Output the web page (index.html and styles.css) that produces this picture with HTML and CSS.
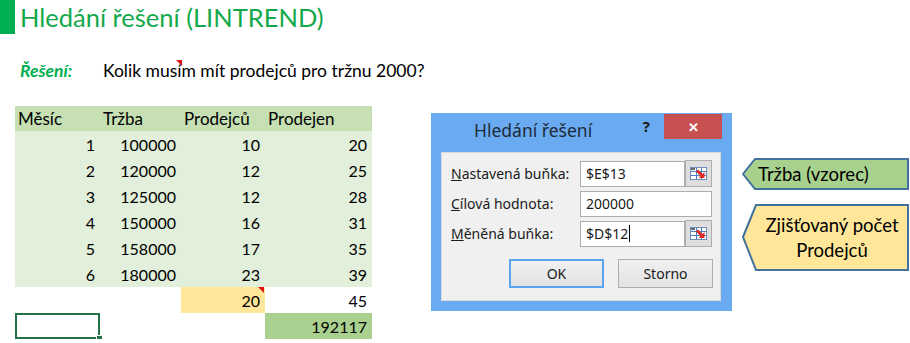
FILE: index.html
```html
<!DOCTYPE html>
<html lang="cs">
<head>
    <meta charset="UTF-8">
    <title>Hledání řešení (LINTREND)</title>
    <link rel="stylesheet" href="styles.css">
</head>
<body>
    <div class="title-row">
        <span class="title-mark"></span>
        <h1>Hledání řešení (LINTREND)</h1>
    </div>

    <div class="question-row">
        <span class="q-label">Řešení:</span>
        <span class="q-text">Kolik musím mít prodejců pro tržnu 2000?</span>
        <span class="comment-mark q-mark"></span>
    </div>

    <div class="workspace">
        <table class="data">
            <colgroup>
                <col class="col-a"><col class="col-b"><col class="col-c"><col class="col-d">
            </colgroup>
            <tr class="head">
                <th>Měsíc</th><th>Tržba</th><th>Prodejců</th><th>Prodejen</th>
            </tr>
            <tr class="body"><td>1</td><td>100000</td><td>10</td><td>20</td></tr>
            <tr class="body"><td>2</td><td>120000</td><td>12</td><td>25</td></tr>
            <tr class="body"><td>3</td><td>125000</td><td>12</td><td>28</td></tr>
            <tr class="body"><td>4</td><td>150000</td><td>16</td><td>31</td></tr>
            <tr class="body"><td>5</td><td>158000</td><td>17</td><td>35</td></tr>
            <tr class="body"><td>6</td><td>180000</td><td>23</td><td>39</td></tr>
            <tr>
                <td></td><td></td>
                <td class="changing">20<span class="comment-mark cell-mark"></span></td>
                <td>45</td>
            </tr>
            <tr>
                <td class="selected"><span class="fill-handle"></span></td><td></td><td></td>
                <td class="target">192117</td>
            </tr>
        </table>

        <div class="dialog">
            <div class="dlg-titlebar">
                <span class="dlg-title">Hledání řešení</span>
                <span class="dlg-help">?</span>
                <span class="dlg-close">✕</span>
            </div>
            <div class="dlg-panel">
                <div class="field">
                    <label><u>N</u>astavená buňka:</label>
                    <span class="input">$E$13</span>
                    <span class="ref-btn">
                        <svg width="19" height="15" viewBox="0 0 19 15">
                            <rect x="1.5" y="1.5" width="16" height="12" fill="#fff" stroke="#6f8fb8"/>
                            <path d="M2 5.5H17M2 9.5H17M7.5 2V13M12.5 2V13" stroke="#4d7dc4" stroke-width="1"/>
                            <path d="M2 3H6" stroke="#333" stroke-width="1.5"/>
                            <path d="M8 4.5L13 9.5" stroke="#e02a1e" stroke-width="3"/>
                            <polygon points="15.5,12 9.5,12 15.5,6" fill="#e02a1e"/>
                        </svg>
                    </span>
                </div>
                <div class="field">
                    <label><u>C</u>ílová hodnota:</label>
                    <span class="input wide">200000</span>
                </div>
                <div class="field">
                    <label><u>M</u>ěněná buňka:</label>
                    <span class="input">$D$12<span class="caret"></span></span>
                    <span class="ref-btn">
                        <svg width="19" height="15" viewBox="0 0 19 15">
                            <rect x="1.5" y="1.5" width="16" height="12" fill="#fff" stroke="#6f8fb8"/>
                            <path d="M2 5.5H17M2 9.5H17M7.5 2V13M12.5 2V13" stroke="#4d7dc4" stroke-width="1"/>
                            <path d="M2 3H6" stroke="#333" stroke-width="1.5"/>
                            <path d="M8 4.5L13 9.5" stroke="#e02a1e" stroke-width="3"/>
                            <polygon points="15.5,12 9.5,12 15.5,6" fill="#e02a1e"/>
                        </svg>
                    </span>
                </div>
                <div class="dlg-buttons">
                    <button class="default">OK</button>
                    <button>Storno</button>
                </div>
            </div>
        </div>

        <div class="notes">
            <div class="note note-green">
                <svg class="note-shape" width="168" height="32" viewBox="0 0 168 32">
                    <polygon points="1,16 13,1 166,1 166,31 13,31" fill="#a9d18e" stroke="#41719c" stroke-width="2"/>
                </svg>
                <span class="note-text">Tržba (vzorec)</span>
            </div>
            <div class="note note-yellow">
                <svg class="note-shape" width="168" height="67" viewBox="0 0 168 67">
                    <polygon points="1,33 14,1 166,1 166,66 14,66" fill="#ffe699" stroke="#41719c" stroke-width="2"/>
                </svg>
                <span class="note-text">Zjišťovaný počet<br>Prodejců</span>
            </div>
        </div>
    </div>
</body>
</html>
```

FILE: styles.css
```css
body {
    margin: 0;
    background-color: #ffffff;
    font-family: Lato, "Liberation Sans", sans-serif;
    font-size: 16px;
    color: #000000;
}

/* title */
.title-row {
    display: flex;
    align-items: center;
    height: 34px;
}

.title-mark {
    width: 15px;
    height: 34px;
    background-color: #00b050;
}

h1 {
    margin: 0 0 0 5px;
    font-size: 25.5px;
    font-weight: 400;
    color: #13a94b;
}

/* question */
.question-row {
    position: relative;
    display: flex;
    align-items: center;
    height: 72px;
    padding-left: 20px;
    font-size: 17.5px;
}

.q-label {
    width: 83px;
    font-weight: bold;
    font-style: italic;
    color: #00b050;
}

.comment-mark {
    position: absolute;
    width: 0;
    height: 0;
    border-top: 6px solid #e0120f;
    border-left: 6px solid transparent;
}

.q-mark {
    top: 26px;
    left: 176px;
}

/* sheet table */
.workspace {
    display: flex;
    align-items: flex-start;
}

.data {
    margin-left: 15px;
    border-collapse: collapse;
    table-layout: fixed;
    width: 357px;
}

.col-a { width: 85px; }
.col-b { width: 81px; }
.col-c { width: 84px; }
.col-d { width: 107px; }

.data th,
.data td {
    padding: 0 5px 0 3px;
    height: 26px;
    font-weight: 400;
    white-space: nowrap;
}

.data th {
    height: 25px;
    font-size: 17px;
    text-align: left;
    background-color: #c6e0b4;
}

.data td {
    text-align: right;
}

.data tr.body td {
    background-color: #e2efda;
}

.data td.changing {
    position: relative;
    background-color: #ffe699;
}

.cell-mark {
    top: 0;
    right: 1px;
}

.data td.target {
    background-color: #a9d08e;
}

.data td.selected {
    position: relative;
    box-shadow: inset 0 0 0 2px #217346;
}

.fill-handle {
    position: absolute;
    right: -3px;
    bottom: -3px;
    width: 5px;
    height: 5px;
    background-color: #217346;
    border: 1px solid #ffffff;
}

/* dialog */
.dialog {
    display: flex;
    flex-direction: column;
    box-sizing: border-box;
    width: 301px;
    height: 198px;
    margin: 7px 0 0 59px;
    padding: 0 11px 10px 10px;
    background-color: #6aaaf0;
    font-family: "Noto Sans", "Open Sans", sans-serif;
    font-size: 14px;
    color: #1a1a1a;
}

.dlg-titlebar {
    display: flex;
    align-items: flex-start;
    height: 39px;
}

.dlg-title {
    flex: 1;
    padding: 5px 0 0 33px;
    font-size: 17.5px;
    color: #1e2a36;
}

.dlg-help {
    margin: 3px 14px 0 0;
    font-size: 15px;
    font-weight: bold;
    color: #1a1a1a;
}

.dlg-close {
    display: flex;
    align-items: center;
    justify-content: center;
    width: 58px;
    height: 25px;
    margin: 1px -1px 0 0;
    background-color: #c75050;
    color: #ffffff;
    font-size: 13px;
    font-weight: bold;
}

.dlg-panel {
    flex: 1;
    display: flex;
    flex-direction: column;
    padding: 7px 7px 0 9px;
    background-color: #f0f0f0;
    border: 1px solid #dadada;
}

.field {
    display: flex;
    align-items: center;
    height: 27px;
    margin-bottom: 3px;
}

.field label {
    width: 129px;
}

.input {
    display: flex;
    align-items: center;
    box-sizing: border-box;
    width: 105px;
    height: 26px;
    padding-left: 5px;
    background-color: #ffffff;
    border: 1px solid #abadb3;
}

.input.wide {
    width: 132px;
}

.caret {
    width: 1px;
    height: 17px;
    margin-left: 1px;
    background-color: #000000;
}

.ref-btn {
    display: flex;
    align-items: center;
    justify-content: center;
    box-sizing: border-box;
    width: 27px;
    height: 27px;
    background-color: #dedede;
    border: 1px solid #adadad;
}

.dlg-buttons {
    display: flex;
    justify-content: flex-end;
    gap: 14px;
    margin-top: 9px;
}

.dlg-buttons button {
    width: 95px;
    height: 29px;
    padding: 0;
    font-family: "Noto Sans", "Open Sans", sans-serif;
    font-size: 14px;
    color: #1a1a1a;
    background: linear-gradient(#f0f0f0, #e3e3e3);
    border: 1px solid #adadad;
}

.dlg-buttons button.default {
    border: 2px solid #5aa3ef;
}

/* callouts */
.notes {
    display: flex;
    flex-direction: column;
    gap: 14px;
    margin: 52px 0 0 10px;
    font-size: 18.5px;
}

.note {
    position: relative;
    display: flex;
    align-items: center;
    width: 168px;
}

.note-green {
    height: 32px;
}

.note-yellow {
    height: 67px;
    justify-content: center;
    text-align: center;
    line-height: 25px;
}

.note-shape {
    position: absolute;
    top: 0;
    left: 0;
}

.note-text {
    position: relative;
    padding-left: 16px;
}

.note-yellow .note-text {
    padding-left: 12px;
}
```
